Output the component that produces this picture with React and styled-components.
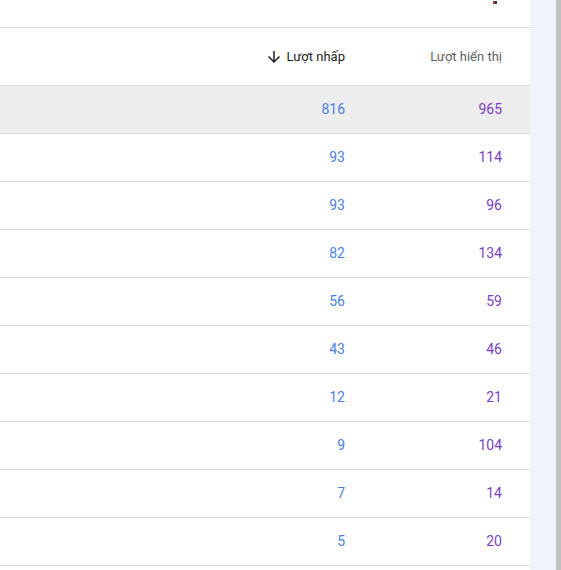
import React from "react";
import styled, { createGlobalStyle } from "styled-components";

const Global = createGlobalStyle`
  html, body { margin: 0; padding: 0; background: #fff; overflow: hidden; }
  body { font-family: Roboto, "Noto Sans", Arial, sans-serif; }
`;

const Page = styled.div`
  display: flex;
  height: 570px;
  width: 561px;
`;

const Content = styled.div`
  width: 530px;
  background: #fff;
  display: flex;
  flex-direction: column;
`;

const Side = styled.div`
  width: 26px;
  background: #eff3fb;
`;

const Scrollbar = styled.div`
  width: 5px;
  background: #c1c1c1;
`;

const TopBar = styled.div`
  height: 27px;
  border-bottom: 1px solid #dadada;
  display: flex;
  justify-content: flex-end;
  padding-right: 33px;
`;

const Mark = styled.div`
  width: 4px;
  height: 3px;
  margin-top: 1px;
  background: linear-gradient(90deg, #a0332f 0 50%, #3c3f5a 50% 100%);
`;

const Row = styled.div`
  display: grid;
  grid-template-columns: 1fr 157px 157px;
  padding-right: 28px;
  box-sizing: border-box;
  height: ${(p) => (p.$header ? 58 : 48)}px;
  padding-bottom: ${(p) => (p.$header ? 0 : 2)}px;
  border-bottom: 1px solid #dadada;
  background: ${(p) => (p.$active ? "#ededed" : "#fff")};
  align-items: center;
`;

const HeadCell = styled.div`
  display: flex;
  justify-content: flex-end;
  align-items: center;
  gap: 4px;
  font-size: 13px;
  color: ${(p) => (p.$sorted ? "#202124" : "#5f6368")};
`;

const Cell = styled.div`
  text-align: right;
  font-size: 14px;
  color: ${(p) => p.$color};
`;

const ArrowDown = () => (
  <svg width="18" height="18" viewBox="0 0 24 24" fill="#202124">
    <path d="M20 12l-1.41-1.41L13 16.17V4h-2v12.17l-5.58-5.59L4 12l8 8 8-8z" />
  </svg>
);

const data = [
  [816, 965],
  [93, 114],
  [93, 96],
  [82, 134],
  [56, 59],
  [43, 46],
  [12, 21],
  [9, 104],
  [7, 14],
  [5, 20],
];

export default function App() {
  return (
    <>
      <Global />
      <Page>
        <Content>
          <TopBar>
            <Mark />
          </TopBar>
          <Row $header>
            <div />
            <HeadCell $sorted>
              <ArrowDown />
              <span>Lượt nhấp</span>
            </HeadCell>
            <HeadCell>Lượt hiển thị</HeadCell>
          </Row>
          {data.map(([c, i], idx) => (
            <Row key={idx} $active={idx === 0}>
              <div />
              <Cell $color="#4a7fe0">{c}</Cell>
              <Cell $color="#7b3fc0">{i}</Cell>
            </Row>
          ))}
        </Content>
        <Side />
        <Scrollbar />
      </Page>
    </>
  );
}
